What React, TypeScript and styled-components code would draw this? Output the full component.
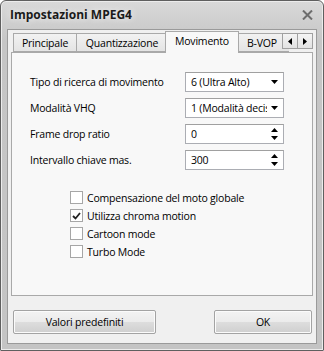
import styled, { createGlobalStyle } from "styled-components";

const Global = createGlobalStyle`
  html, body { margin: 0; padding: 0; background: #ffffff; }
  * { box-sizing: border-box; }
`

const Window = styled.div`
  width: 324px;
  height: 351px;
  border: 1px solid #5f5f5f;
  border-radius: 6px 6px 1px 1px;
  background: linear-gradient(#d9d9d9, #c6c6c6 40px, #c4c4c4);
  display: flex;
  flex-direction: column;
  font-family: "Open Sans", "Noto Sans", sans-serif;
  font-size: 10.5px;
  letter-spacing: -0.2px;
  color: #000;
  box-shadow: inset 0 0 0 1px #ececec;
`

const TitleBar = styled.div`
  height: 28px;
  display: flex;
  align-items: center;
  justify-content: space-between;
  padding: 0 10px 1px 9px;
`

const Title = styled.div`
  font-weight: 700;
  font-size: 12px;
  letter-spacing: 0;
  color: #1a1a1a;
  text-shadow: 0 0 6px #f4f4f4;
`

const Client = styled.div`
  flex: 1;
  margin: 0 6px 6px 6px;
  border: 1px solid #9a9a9a;
  background: #f0f0f0;
  padding: 2px 3px 0 3px;
  display: flex;
  flex-direction: column;
`

const TabRow = styled.div`
  display: flex;
  align-items: flex-end;
  height: 20px;
  padding-left: 2px;
  position: relative;
  z-index: 1;
`

const Tab = styled.div<{ $active?: boolean; $w: number }>`
  width: ${p => p.$w}px;
  height: ${p => (p.$active ? 22 : 19)}px;
  margin-bottom: ${p => (p.$active ? -1 : 0)}px;
  margin-left: ${p => (p.$active ? -2 : 0)}px;
  margin-right: ${p => (p.$active ? -2 : 0)}px;
  border: 1px solid #a9a9a9;
  border-bottom: ${p => (p.$active ? "none" : "1px solid #a9a9a9")};
  border-right-width: ${p => (p.$active ? 1 : 0)}px;
  background: ${p => (p.$active ? "#f8f8f8" : "linear-gradient(#f2f2f2, #e4e4e4)")};
  display: flex;
  align-items: ${p => (p.$active ? "flex-start" : "center")};
  justify-content: center;
  padding-top: ${p => (p.$active ? 2 : 0)}px;
  white-space: nowrap;
  overflow: hidden;
  position: relative;
  z-index: ${p => (p.$active ? 2 : 1)};
`

const ClippedTab = styled(Tab)`
  justify-content: flex-start;
  padding-left: 9px;
`

const ScrollButtons = styled.div`
  display: flex;
  position: absolute;
  right: 0;
  top: 1px;
  z-index: 3;
`

const ScrollButton = styled.div`
  width: 16px;
  height: 16px;
  border: 1px solid #a0a0a0;
  background: linear-gradient(#f4f4f4, #e2e2e2);
  display: flex;
  align-items: center;
  justify-content: center;
  & + & { margin-left: -1px; }
`

const Panel = styled.div`
  height: 244px;
  border: 1px solid #a9a9a9;
  background: #f8f8f8;
  padding: 19px 28px 0 18px;
  display: flex;
  flex-direction: column;
`

const FieldGrid = styled.div`
  display: grid;
  grid-template-columns: 1fr 99px;
  row-gap: 6px;
  align-items: center;
`

const Label = styled.div`
  white-space: nowrap;
`

const Field = styled.div`
  height: 20px;
  border: 1px solid #abadb3;
  border-top-color: #a0a0a0;
  background: #fff;
  display: flex;
  align-items: center;
  padding-left: 5px;
  overflow: hidden;
  white-space: nowrap;
`

const FieldText = styled.span`
  flex: 1;
  overflow: hidden;
`

const FieldIcon = styled.span`
  width: 16px;
  flex: none;
  display: flex;
  align-items: center;
  justify-content: center;
  background: #fff;
  align-self: stretch;
`

const Checks = styled.div`
  margin-top: 21px;
  margin-left: 40px;
  display: flex;
  flex-direction: column;
  gap: 5px;
`

const CheckRow = styled.label`
  display: flex;
  align-items: center;
  gap: 4px;
  height: 13px;
`

const Box = styled.span`
  width: 13px;
  height: 13px;
  border: 1px solid #a6a6a6;
  background: #fff;
  display: flex;
  align-items: center;
  justify-content: center;
  flex: none;
`

const Footer = styled.div`
  display: flex;
  justify-content: space-between;
  padding: 14px 1px 0 2px;
`

const Button = styled.div<{ $w: number }>`
  width: ${p => p.$w}px;
  height: 24px;
  border: 1px solid #a3a3a3;
  border-radius: 2px;
  background: linear-gradient(#f3f3f3 0%, #ebebeb 50%, #dddddd 51%, #cfcfcf 100%);
  box-shadow: inset 0 0 0 1px #fbfbfb;
  display: flex;
  align-items: center;
  justify-content: center;
`

const Combo = ({ value }: { value: string }) => (
  <Field>
    <FieldText>{value}</FieldText>
    <FieldIcon>
      <svg width="8" height="4" viewBox="0 0 8 4"><path d="M0 0h7L3.5 4z" fill="#000" /></svg>
    </FieldIcon>
  </Field>
)

const Spin = ({ value }: { value: string }) => (
  <Field>
    <FieldText>{value}</FieldText>
    <FieldIcon>
      <svg width="8" height="12" viewBox="0 0 8 12">
        <path d="M3.5 0L7 4H0z" fill="#000" />
        <path d="M0 8h7l-3.5 4z" fill="#000" />
      </svg>
    </FieldIcon>
  </Field>
)

const Check = ({ label, checked }: { label: string; checked?: boolean }) => (
  <CheckRow>
    <Box>
      {checked && (
        <svg width="9" height="8" viewBox="0 0 9 8">
          <path d="M1 4l2.5 2.5L8 1" stroke="#222" strokeWidth="1.8" fill="none" />
        </svg>
      )}
    </Box>
    {label}
  </CheckRow>
)

const App = () => {
  return (
    <>
      <Global />
      <Window>
        <TitleBar>
          <Title>Impostazioni MPEG4</Title>
          <svg width="11" height="10" viewBox="0 0 11 10">
            <path d="M1 0.5l9 9M10 0.5l-9 9" stroke="#6d6d6d" strokeWidth="2" />
          </svg>
        </TitleBar>
        <Client>
          <TabRow>
            <Tab $w={63}>Principale</Tab>
            <Tab $w={91}>Quantizzazione</Tab>
            <Tab $w={74} $active>Movimento</Tab>
            <ClippedTab $w={52}>B-VOP</ClippedTab>
            <ScrollButtons>
              <ScrollButton>
                <svg width="4" height="7" viewBox="0 0 4 7"><path d="M4 0v7L0 3.5z" fill="#000" /></svg>
              </ScrollButton>
              <ScrollButton>
                <svg width="4" height="7" viewBox="0 0 4 7"><path d="M0 0v7l4-3.5z" fill="#000" /></svg>
              </ScrollButton>
            </ScrollButtons>
          </TabRow>
          <Panel>
            <FieldGrid>
              <Label>Tipo di ricerca di movimento</Label>
              <Combo value="6 (Ultra Alto)" />
              <Label>Modalità VHQ</Label>
              <Combo value="1 (Modalità decisione)" />
              <Label>Frame drop ratio</Label>
              <Spin value="0" />
              <Label>Intervallo chiave mas.</Label>
              <Spin value="300" />
            </FieldGrid>
            <Checks>
              <Check label="Compensazione del moto globale" />
              <Check label="Utilizza chroma motion" checked />
              <Check label="Cartoon mode" />
              <Check label="Turbo Mode" />
            </Checks>
          </Panel>
          <Footer>
            <Button $w={143}>Valori predefiniti</Button>
            <Button $w={98}>OK</Button>
          </Footer>
        </Client>
      </Window>
    </>
  );
}

export default App;
